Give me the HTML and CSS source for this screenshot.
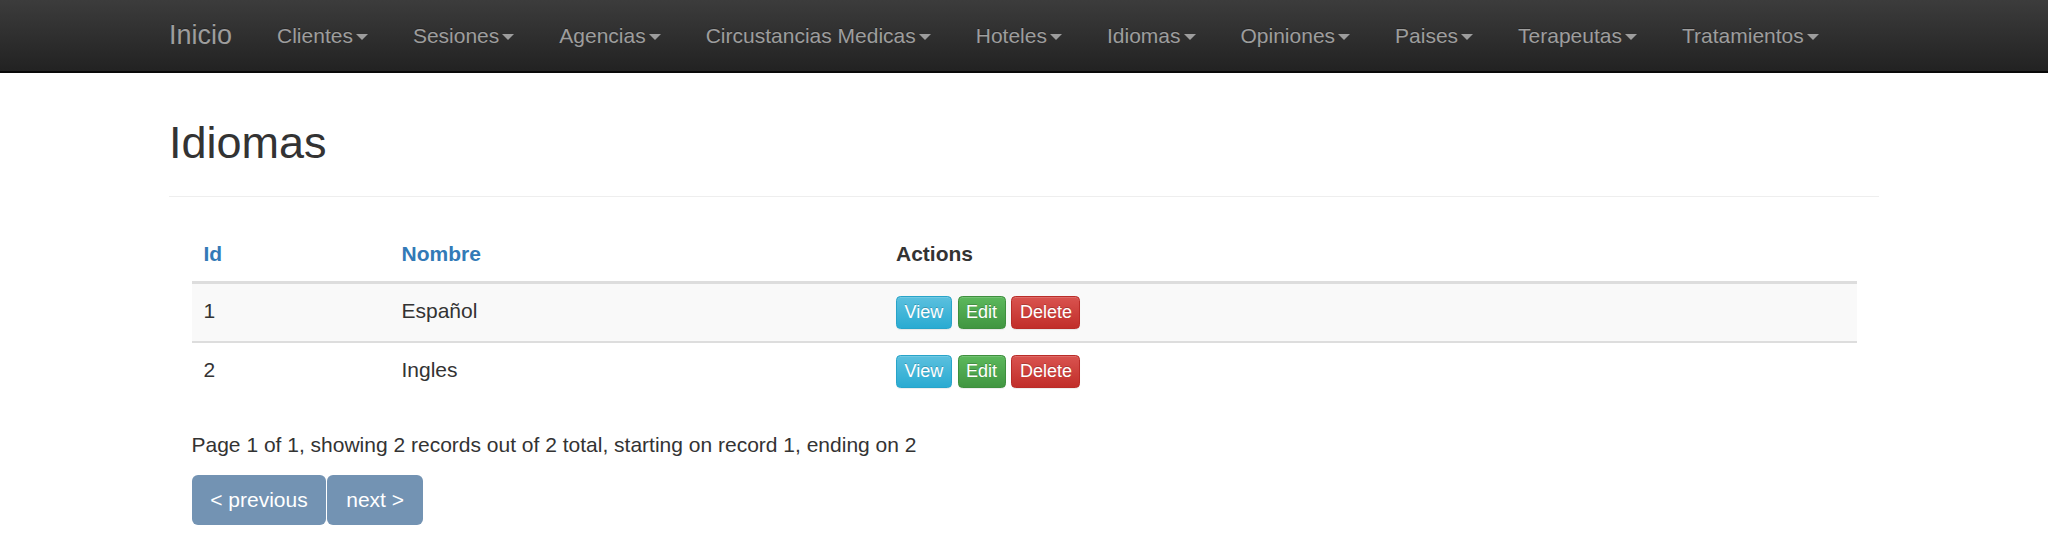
FILE: index.html
```html
<!DOCTYPE html>
<html lang="es">
<head>
<meta charset="utf-8">
<title>Idiomas</title>
<link rel="stylesheet" href="styles.css">
</head>
<body>
<nav class="navbar">
  <div class="container nav-inner">
    <a class="brand" href="#">Inicio</a>
    <ul class="nav">
      <li><a href="#">Clientes<b class="caret"></b></a></li>
      <li><a href="#">Sesiones<b class="caret"></b></a></li>
      <li><a href="#">Agencias<b class="caret"></b></a></li>
      <li><a href="#">Circustancias Medicas<b class="caret"></b></a></li>
      <li><a href="#">Hoteles<b class="caret"></b></a></li>
      <li><a href="#">Idiomas<b class="caret"></b></a></li>
      <li><a href="#">Opiniones<b class="caret"></b></a></li>
      <li><a href="#">Paises<b class="caret"></b></a></li>
      <li><a href="#">Terapeutas<b class="caret"></b></a></li>
      <li><a href="#">Tratamientos<b class="caret"></b></a></li>
    </ul>
  </div>
</nav>
<main class="container">
  <div class="page-header"><h2>Idiomas</h2></div>
  <div class="content">
    <table class="table">
      <colgroup><col class="c-id"><col class="c-name"><col></colgroup>
      <thead>
        <tr><th><a href="#">Id</a></th><th><a href="#">Nombre</a></th><th>Actions</th></tr>
      </thead>
      <tbody>
        <tr class="odd">
          <td>1</td><td>Español</td>
          <td><a class="btn btn-info" href="#">View</a> <a class="btn btn-success" href="#">Edit</a> <a class="btn btn-danger" href="#">Delete</a></td>
        </tr>
        <tr>
          <td>2</td><td>Ingles</td>
          <td><a class="btn btn-info" href="#">View</a> <a class="btn btn-success" href="#">Edit</a> <a class="btn btn-danger" href="#">Delete</a></td>
        </tr>
      </tbody>
    </table>
    <p class="paging-info">Page 1 of 1, showing 2 records out of 2 total, starting on record 1, ending on 2</p>
    <div class="pager"><a class="pg-btn" href="#">&lt; previous</a><a class="pg-btn" href="#">next &gt;</a></div>
  </div>
</main>
</body>
</html>
```
FILE: styles.css
```css
* { box-sizing: border-box; }
html, body { margin: 0; padding: 0; }
body {
  font-family: "Liberation Sans", Arial, sans-serif;
  font-size: 21px;
  line-height: 30px;
  color: #333;
  background: #fff;
  overflow: hidden;
}
a { text-decoration: none; }

.container {
  width: 1755px;
  margin: 0 auto;
  padding: 0 22.5px;
}

/* navbar */
.navbar {
  height: 73px;
  background-image: linear-gradient(to bottom, #3c3c3c 0, #222 100%);
  border-bottom: 2px solid #080808;
}
.nav-inner {
  display: flex;
  padding: 0;
  height: 71px;
}
.brand {
  display: block;
  padding: 20px 22.5px 0;
  font-size: 27px;
  line-height: 30px;
  color: #9d9d9d;
  text-shadow: 0 -1px 0 rgba(0,0,0,.25);
}
.nav {
  display: flex;
  list-style: none;
  margin: 0;
  padding: 0;
}
.nav a {
  display: block;
  padding: 21px 22.5px 0;
  line-height: 30px;
  color: #9d9d9d;
  text-shadow: 0 -1px 0 rgba(0,0,0,.25);
}
.caret {
  display: inline-block;
  width: 0;
  height: 0;
  margin-left: 3px;
  vertical-align: middle;
  border-top: 6px solid #9d9d9d;
  border-left: 6px solid transparent;
  border-right: 6px solid transparent;
}

/* page header */
.page-header {
  padding-bottom: 13.5px;
  margin: 0 0 30px;
  border-bottom: 1px solid #eee;
}
.page-header h2 {
  margin: 45px 0 15px;
  font-size: 45px;
  line-height: 49.5px;
  font-weight: 500;
  color: #333;
}

.content { padding: 0 22.5px; }

/* table */
.table {
  width: 100%;
  table-layout: fixed;
  border-collapse: collapse;
  margin-bottom: 30px;
}
.c-id { width: 198px; }
.c-name { width: 494.5px; }
.table th, .table td {
  padding: 12px;
  text-align: left;
  vertical-align: top;
  line-height: 30px;
}
.table th {
  font-weight: bold;
  border-bottom: 3px solid #ddd;
}
.table th a { color: #337ab7; }
.table td { border-top: 2px solid #ddd; }
.table thead + tbody tr:first-child td { border-top: 0; }
.table tr.odd td { background: #f9f9f9; }

/* buttons */
.btn {
  display: inline-block;
  padding: 2px 7.5px;
  font-size: 18px;
  line-height: 27px;
  border: 1px solid transparent;
  border-radius: 4.5px;
  color: #fff;
  text-shadow: 0 -1px 0 rgba(0,0,0,.2);
  box-shadow: inset 0 1px 0 rgba(255,255,255,.15), 0 1px 1px rgba(0,0,0,.075);
  vertical-align: middle;
}
.btn-info {
  background-image: linear-gradient(to bottom, #5bc0de 0, #2aabd2 100%);
  border-color: #28a4c9;
}
.btn-success {
  background-image: linear-gradient(to bottom, #5cb85c 0, #419641 100%);
  border-color: #3e8f3e;
}
.btn-danger {
  background-image: linear-gradient(to bottom, #d9534f 0, #c12e2a 100%);
  border-color: #b92c28;
}

/* paging */
.paging-info { margin: 0 0 15px; }
.pager { display: flex; }
.pg-btn {
  display: block;
  padding: 9.75px 18.75px;
  line-height: 30px;
  background: #7393b3;
  color: #fff;
  border-radius: 6px;
}
.pg-btn + .pg-btn { margin-left: 1px; }
```
